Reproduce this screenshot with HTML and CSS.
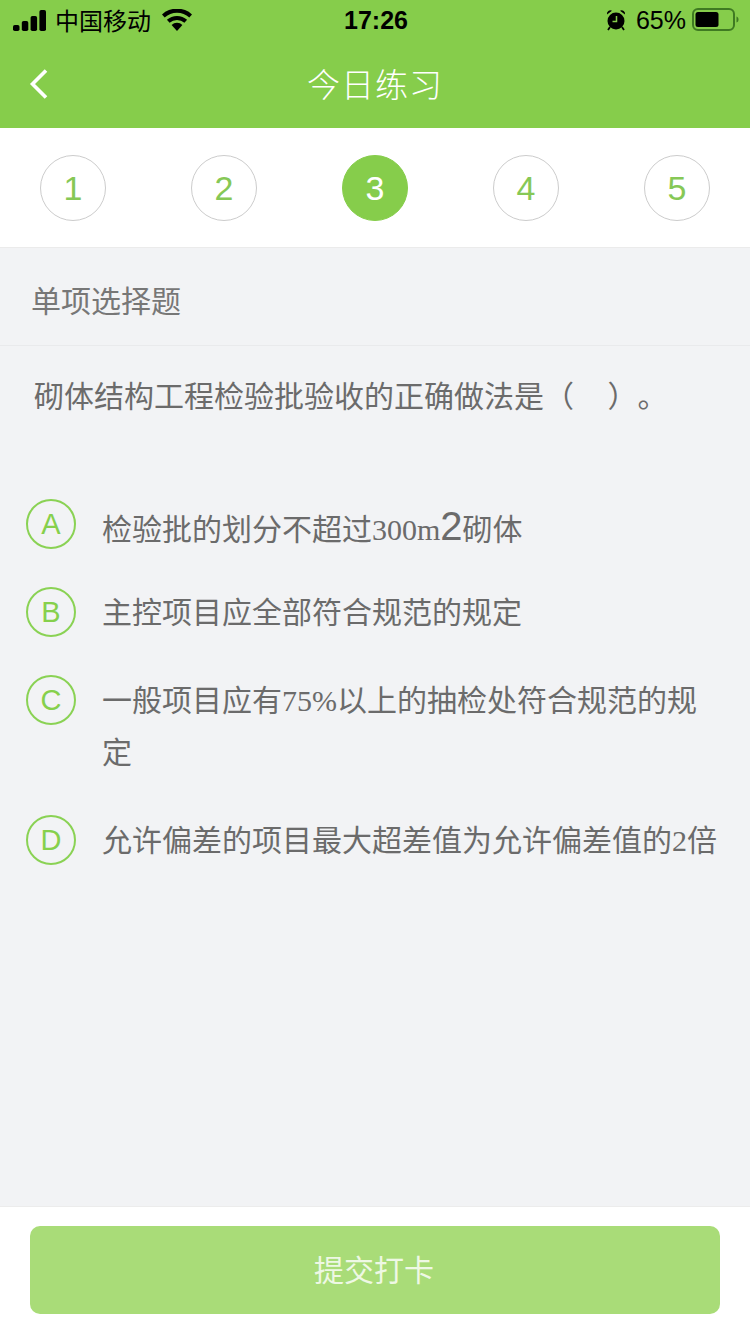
FILE: index.html
```html
<!DOCTYPE html>
<html lang="zh-CN">
<head>
  <meta charset="UTF-8">
  <meta name="viewport" content="width=device-width, initial-scale=1.0">
  <title>今日练习</title>
  <link rel="stylesheet" href="styles.css">
</head>
<body>
  <div class="page">
    <header class="top">
      <div class="status">
        <div class="status-left">
          <svg class="signal" width="33" height="21" viewBox="0 0 33 21">
            <rect x="0" y="15" width="6.500" height="6" rx="1.800"/>
            <rect x="8.800" y="11" width="6.500" height="10" rx="1.800"/>
            <rect x="17.600" y="6" width="6.500" height="15" rx="1.800"/>
            <rect x="26.400" y="0" width="6.600" height="21" rx="1.800"/>
          </svg>
          <span class="carrier">中国移动</span>
          <svg class="wifi" width="30" height="22" viewBox="0 0 30 22">
            <path d="M15 22l-5.400-6a7.500 7.500 0 0 1 10.800 0z"/>
            <path d="M7.600 13.800a11 11 0 0 1 14.800 0l2.700-3a15 15 0 0 0-20.200 0z"/>
            <path d="M2.700 8.400a18.500 18.500 0 0 1 24.600 0l2.700-3a22.300 22.300 0 0 0-30 0z"/>
          </svg>
        </div>
        <div class="time">17:26</div>
        <div class="status-right">
          <svg class="alarm" width="20" height="22" viewBox="0 0 20 22">
            <circle cx="10" cy="12" r="8.500"/>
            <path d="M1 5.500a3.500 3.500 0 0 1 5-3.800zM19 5.500a3.500 3.500 0 0 0-5-3.800z"/>
            <path d="M4 18l-2 3M16 18l2 3" stroke="#000" stroke-width="1.800"/>
            <path d="M10.500 7v5.500H6.500" fill="none" stroke="#86cd4b" stroke-width="1.500"/>
          </svg>
          <span class="percent">65%</span>
          <svg class="battery" width="47" height="24" viewBox="0 0 47 24">
            <rect x="1" y="1" width="41" height="21" rx="5" fill="none" stroke="#3f7a22" stroke-width="2"/>
            <rect x="3.500" y="4" width="23" height="15" rx="2.500" fill="#000"/>
            <path d="M44.500 8.500c1.500.5 2 1.500 2 3s-.5 2.500-2 3z" fill="#3f7a22"/>
          </svg>
        </div>
      </div>
      <div class="nav">
        <svg class="back" width="20" height="32" viewBox="0 0 20 32">
          <path d="M17 2.500L3.500 16 17 29.500" fill="none" stroke="#fff" stroke-width="3.600"/>
        </svg>
        <h1 class="nav-title">今日练习</h1>
      </div>
    </header>

    <div class="steps">
      <div class="step">1</div>
      <div class="step">2</div>
      <div class="step active">3</div>
      <div class="step">4</div>
      <div class="step">5</div>
    </div>

    <main class="content">
      <div class="qtype">单项选择题</div>
      <p class="question">砌体结构工程检验批验收的正确做法是（&nbsp;&nbsp;&nbsp;&nbsp;&nbsp;）。</p>

      <ul class="options">
        <li class="option">
          <span class="letter">A</span>
          <span class="option-text tall">检验批的划分不超过<span class="num">300m</span><span class="big">2</span>砌体</span>
        </li>
        <li class="option">
          <span class="letter">B</span>
          <span class="option-text">主控项目应全部符合规范的规定</span>
        </li>
        <li class="option">
          <span class="letter">C</span>
          <span class="option-text">一般项目应有<span class="num">75%</span>以上的抽检处符合规范的规定</span>
        </li>
        <li class="option">
          <span class="letter">D</span>
          <span class="option-text">允许偏差的项目最大超差值为允许偏差值的<span class="num">2</span>倍</span>
        </li>
      </ul>
    </main>

    <footer class="bottom">
      <button class="submit">提交打卡</button>
    </footer>
  </div>
</body>
</html>
```

FILE: styles.css
```css
* {
  box-sizing: border-box;
}

body {
  margin: 0;
  font-family: "Noto Sans CJK SC", "Liberation Sans", sans-serif;
  background-color: #f2f3f5;
  color: #666;
}

.page {
  width: 750px;
  height: 1334px;
  display: flex;
  flex-direction: column;
  overflow: hidden;
}

.top {
  height: 128px;
  background-color: #86cd4b;
}

.status {
  height: 40px;
  padding: 0 11px 0 13px;
  display: grid;
  grid-template-columns: 1fr auto 1fr;
  align-items: center;
  color: #000;
}

.status-left,
.status-right {
  display: flex;
  align-items: center;
}

.status-right {
  justify-content: flex-end;
}

.carrier {
  margin-left: 9px;
  font-size: 24px;
  line-height: 30px;
}

.wifi {
  margin-left: 11px;
}

.time {
  font-family: "Liberation Sans", sans-serif;
  font-size: 25px;
  font-weight: bold;
}

.percent {
  margin-left: 10px;
  font-family: "Liberation Sans", sans-serif;
  font-size: 25px;
}

.battery {
  margin-left: 6px;
}

.nav {
  position: relative;
  height: 88px;
  display: flex;
  align-items: center;
  justify-content: center;
}

.back {
  position: absolute;
  left: 29px;
  top: 28px;
}

.nav-title {
  margin: 0;
  font-size: 33px;
  font-weight: 300;
  color: #fff;
  letter-spacing: 1px;
  padding-bottom: 2px;
}

.steps {
  height: 120px;
  padding: 27px 40px 0;
  background-color: #fff;
  border-bottom: 1px solid #ebebeb;
  display: flex;
  justify-content: space-between;
  align-items: flex-start;
}

.step {
  width: 66px;
  height: 66px;
  border: 1px solid #ccc;
  border-radius: 50%;
  display: flex;
  align-items: center;
  justify-content: center;
  font-family: "Liberation Sans", sans-serif;
  font-size: 34px;
  color: #86c856;
}

.step.active {
  background-color: #86cd4b;
  border-color: #86cd4b;
  color: #fff;
}

.content {
  flex: 1;
}

.qtype {
  height: 98px;
  padding: 4px 0 0 31px;
  border-bottom: 1px solid #e9eaec;
  display: flex;
  align-items: center;
  font-size: 30px;
  color: #777;
}

.question {
  margin: 0;
  padding: 22px 0 0 34px;
  font-size: 30px;
  line-height: 52px;
  height: 150px;
  color: #6b6b6b;
  text-spacing-trim: space-all;
}

.options {
  list-style: none;
  margin: 0;
  padding: 0 26px;
  display: flex;
  flex-direction: column;
  gap: 36px;
}

.option {
  display: flex;
  gap: 26px;
}

.letter {
  flex: none;
  width: 50px;
  height: 50px;
  margin-top: 3px;
  margin-bottom: -1px;
  border: 2px solid #8ad254;
  border-radius: 50%;
  display: flex;
  align-items: center;
  justify-content: center;
  font-family: "Liberation Sans", sans-serif;
  font-size: 29px;
  color: #86d04c;
}

.option-text {
  flex: 1;
  font-size: 30px;
  line-height: 52px;
  color: #6b6b6b;
}

/* the first option sits a little low because of its big 2 */
.option-text.tall {
  padding-top: 5px;
  margin-bottom: -5px;
}

.num {
  font-family: "Liberation Serif", serif;
  font-size: 30px;
  line-height: 0;
}

.big {
  font-family: "Liberation Sans", sans-serif;
  font-size: 40px;
  line-height: 0;
}

.bottom {
  height: 128px;
  padding: 19px 30px;
  background-color: #fff;
  border-top: 1px solid #ececec;
}

.submit {
  width: 100%;
  height: 88px;
  padding: 0 2px 4px 0;
  border: none;
  border-radius: 10px;
  background-color: #a9dc78;
  color: #eef8e4;
  font-family: inherit;
  font-size: 30px;
}
```
